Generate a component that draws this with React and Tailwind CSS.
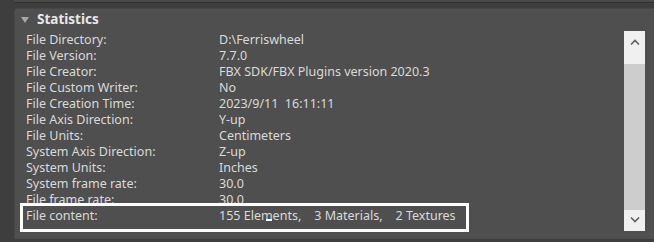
import React from 'react';

// Statistics rollout from an FBX import dialog (dark theme)
const ROWS = [
  ['File Directory:', 'D:\\Ferriswheel'],
  ['File Version:', '7.7.0'],
  ['File Creator:', 'FBX SDK/FBX Plugins version 2020.3'],
  ['File Custom Writer:', 'No'],
  ['File Creation Time:', '2023/9/11  16:11:11'],
  ['File Axis Direction:', 'Y-up'],
  ['File Units:', 'Centimeters'],
  ['System Axis Direction:', 'Z-up'],
  ['System Units:', 'Inches'],
  ['System frame rate:', '30.0'],
  ['File frame rate:', '30.0'],
  ['File content:', '155 Elements,    3 Materials,    2 Textures'],
];

function Chevron({ up }) {
  return (
    <svg width="10" height="6" viewBox="0 0 10 6" className="text-[#606060]">
      <path
        d={up ? 'M1 5.5 L5 1.5 L9 5.5' : 'M1 0.5 L5 4.5 L9 0.5'}
        fill="none"
        stroke="currentColor"
        strokeWidth="1.6"
      />
    </svg>
  );
}

function Scrollbar() {
  return (
    <div className="flex flex-col w-[21px] h-[200px] bg-[#cdcdcd]">
      <div className="h-[33px] bg-[#f0f0f0] flex justify-center pt-[8px]">
        <Chevron up />
      </div>
      <div className="flex-1" />
      <div className="h-[21px] bg-[#f0f0f0] flex justify-center pt-[7px]">
        <Chevron />
      </div>
    </div>
  );
}

export default function App() {
  return (
    <div
      className="w-[654px] h-[242px] bg-[#3e3e3e] overflow-hidden relative"
      style={{ fontFamily: '"Noto Sans", "Liberation Sans", sans-serif' }}
    >
      <div className="ml-[14px] h-[3px] bg-[#4a4a4a] border-b border-[#303030]" />
      <div className="ml-[14px] mt-[5px] h-[231px] bg-[#4f4f4f] rounded-tl-[3px] border-l border-t border-[#474747]">
        <div className="h-[22px] flex items-center pl-[6px]">
          <svg width="8" height="6" viewBox="0 0 8 6" className="mr-[8px]">
            <path d="M0 0 L8 0 L4 6 Z" fill="#a8a8a8" />
          </svg>
          <span className="text-[13.5px] font-bold text-[#e8e8e8] leading-none">Statistics</span>
        </div>
        <div className="flex">
          <div className="w-[596px] pl-[11px] pt-[1px]">
            {ROWS.map(([k, v]) => (
              <div key={k} className="h-[16px] flex items-center text-[12.5px] text-[#dadada] leading-none">
                <span className="w-[193px] shrink-0">{k}</span>
                <span className="whitespace-pre">{v}</span>
              </div>
            ))}
          </div>
          <div className="ml-[13px]">
            <Scrollbar />
          </div>
        </div>
      </div>
      {/* highlight annotation */}
      <div className="absolute left-[20px] top-[203px] w-[449px] h-[29px] border-[3px] border-white" />
      <div className="absolute left-[266px] top-[219px] w-[6px] h-[2px] bg-white" />
    </div>
  );
}
